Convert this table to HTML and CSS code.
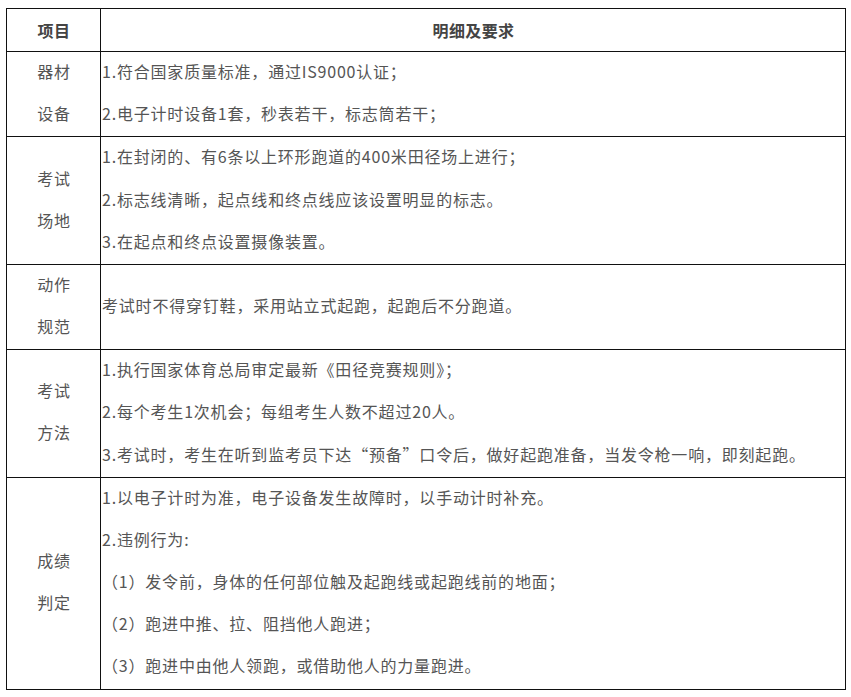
FILE: index.html
```html
<!DOCTYPE html>
<html lang="zh-CN">
<head>
<meta charset="utf-8">
<title>考试要求</title>
<link rel="stylesheet" href="styles.css">
</head>
<body>
<table class="spec">
  <colgroup>
    <col class="col-item">
    <col class="col-detail">
  </colgroup>
  <thead>
    <tr>
      <th class="head">项目</th>
      <th class="head">明细及要求</th>
    </tr>
  </thead>
  <tbody>
    <tr>
      <td class="item"><p>器材</p><p>设备</p></td>
      <td class="detail"><p>1.符合国家质量标准，通过IS9000认证；</p><p>2.电子计时设备1套，秒表若干，标志筒若干；</p></td>
    </tr>
    <tr>
      <td class="item"><p>考试</p><p>场地</p></td>
      <td class="detail"><p>1.在封闭的、有6条以上环形跑道的400米田径场上进行；</p><p>2.标志线清晰，起点线和终点线应该设置明显的标志。</p><p>3.在起点和终点设置摄像装置。</p></td>
    </tr>
    <tr>
      <td class="item"><p>动作</p><p>规范</p></td>
      <td class="detail"><p>考试时不得穿钉鞋，采用站立式起跑，起跑后不分跑道。</p></td>
    </tr>
    <tr>
      <td class="item"><p>考试</p><p>方法</p></td>
      <td class="detail"><p>1.执行国家体育总局审定最新《田径竞赛规则》；</p><p>2.每个考生1次机会；每组考生人数不超过20人。</p><p>3.考试时，考生在听到监考员下达“预备”口令后，做好起跑准备，当发令枪一响，即刻起跑。</p></td>
    </tr>
    <tr>
      <td class="item"><p>成绩</p><p>判定</p></td>
      <td class="detail"><p>1.以电子计时为准，电子设备发生故障时，以手动计时补充。</p><p>2.违例行为:</p><p>（1）发令前，身体的任何部位触及起跑线或起跑线前的地面；</p><p>（2）跑进中推、拉、阻挡他人跑进；</p><p>（3）跑进中由他人领跑，或借助他人的力量跑进。</p></td>
    </tr>
  </tbody>
</table>
</body>
</html>
```

FILE: styles.css
```css
html, body {
  background: #ffffff;
}

body {
  margin: 8px 5px 0 6px;
  font-family: "Noto Sans CJK SC", "Microsoft YaHei", sans-serif;
  font-size: 16px;
  letter-spacing: 0.8px;
  color: #555555;
}

.spec {
  width: 840px;
  border-collapse: collapse;
  table-layout: fixed;
}

.col-item {
  width: 94px;
}

.spec th,
.spec td {
  border: 1px solid #111111;
  padding: 0 0 0 1px;
  line-height: 42.15px;
  vertical-align: middle;
}

.spec p {
  margin: -2px 0 2px 0;
  white-space: nowrap;
}

.head {
  font-weight: 700;
  color: #444444;
  letter-spacing: 0.4px;
  text-align: center;
}

.item {
  text-align: center;
}

.detail {
  text-align: left;
}
```
